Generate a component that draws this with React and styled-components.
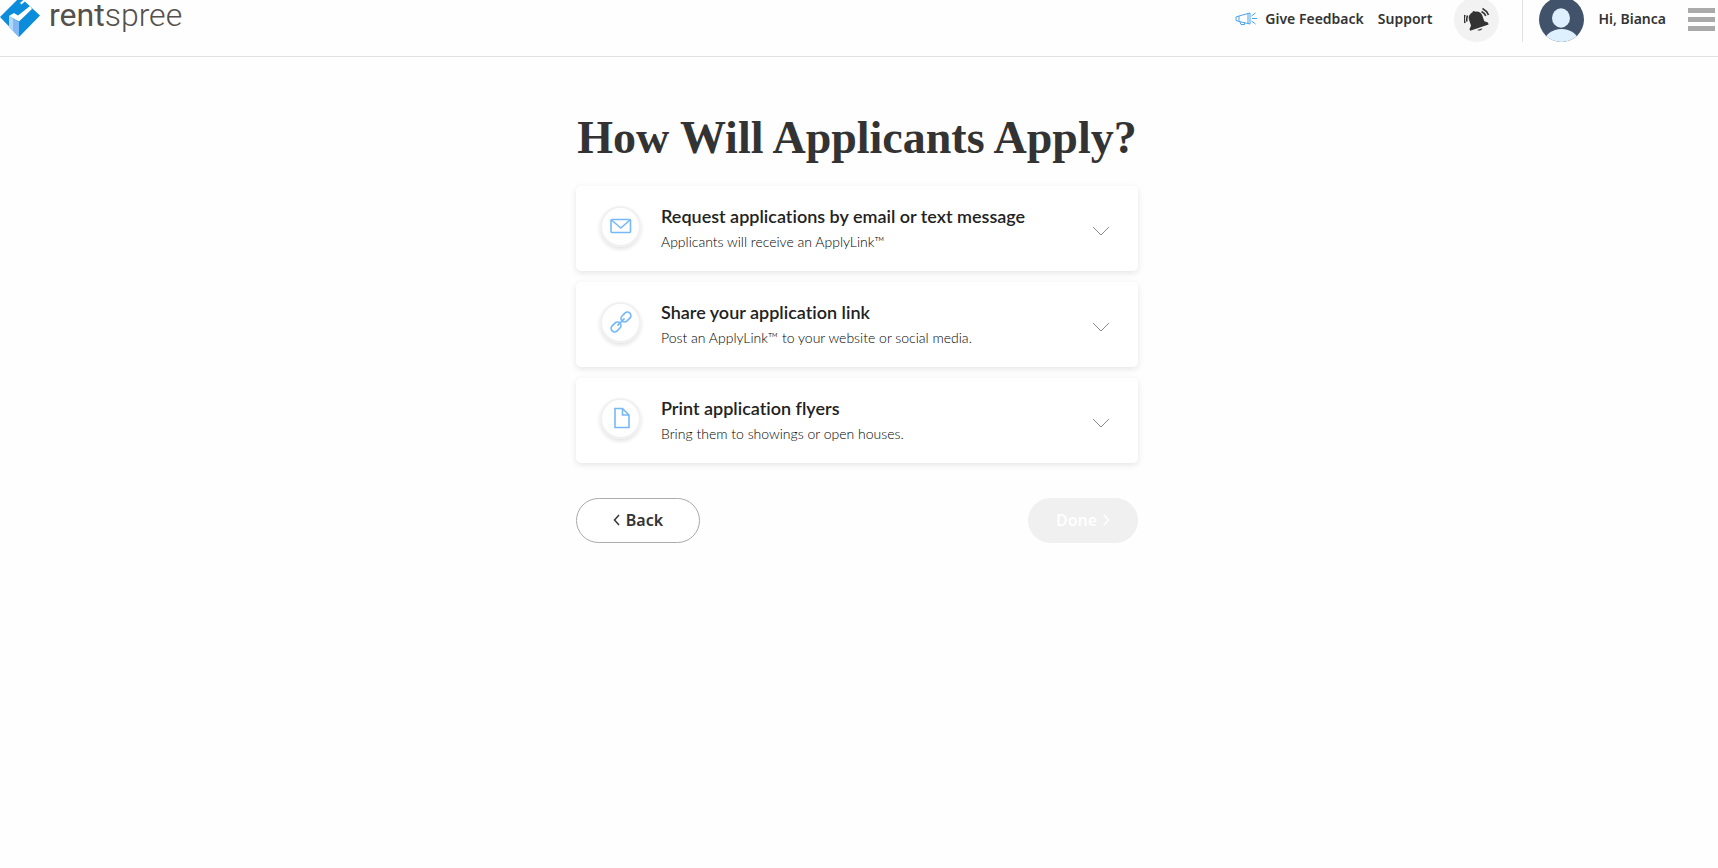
import React from 'react';
import styled, { createGlobalStyle } from 'styled-components';

const GlobalStyle = createGlobalStyle`
  * {
    box-sizing: border-box;
  }

  body {
    margin: 0;
    background-color: #fefefe;
    color: #333;
    font-family: Lato, sans-serif;
  }

  button {
    font-family: inherit;
    color: inherit;
  }
`;

const Header = styled.header`
  display: flex;
  align-items: flex-start;
  justify-content: space-between;
  height: 57px;
  padding-right: 3px;
  border-bottom: 1px solid #e1e1e1;
`;

const LogoLink = styled.a`
  display: flex;
  align-items: center;
  gap: 9px;
  height: 30px;
  color: #54504c;
  font-family: Roboto, sans-serif;
  font-size: 32px;
  line-height: 30px;
  text-decoration: none;
`;

const LogoLight = styled.span`
  font-weight: 300;
`;

const Nav = styled.nav`
  display: flex;
  align-items: center;
  height: 39px;
  font-family: 'Noto Sans', sans-serif;
  font-size: 14px;
  font-weight: 600;
  line-height: 20px;
`;

const NavLink = styled.a`
  display: flex;
  align-items: center;
  gap: 8px;
  margin-right: 14px;
  padding-bottom: 2px;
  color: #333;
  text-decoration: none;
`;

const BellButton = styled.button`
  display: flex;
  align-items: center;
  justify-content: center;
  width: 45px;
  height: 45px;
  margin-left: 8px;
  padding: 0;
  border: none;
  border-radius: 50%;
  background-color: #f2f2f2;
  cursor: pointer;
`;

const Divider = styled.span`
  width: 1px;
  height: 45px;
  margin: 0 16px 0 23px;
  background-color: #e1e1e1;
`;

const UserName = styled.span`
  margin: 0 22px 0 14px;
  padding-bottom: 2px;
`;

const MenuButton = styled.button`
  display: flex;
  flex-direction: column;
  gap: 4px;
  width: 27px;
  padding: 0;
  border: none;
  background: none;
  cursor: pointer;
`;

const MenuBar = styled.span`
  width: 100%;
  height: 5px;
  background-color: #aaa;
`;

const Main = styled.main`
  display: flex;
  flex-direction: column;
  align-items: center;
  padding: 51px 4px 40px 0;
`;

const Title = styled.h1`
  margin: 0 0 18px;
  font-family: 'Liberation Serif', serif;
  font-size: 46px;
  font-weight: 700;
  line-height: 60px;
  text-align: center;
`;

const Content = styled.div`
  width: 100%;
  max-width: 562px;
`;

const OptionList = styled.div`
  display: flex;
  flex-direction: column;
  gap: 11px;
`;

const OptionCard = styled.button`
  display: flex;
  align-items: center;
  width: 100%;
  height: 85px;
  padding: 0 28px 2px 24px;
  border: none;
  border-radius: 5px;
  background-color: #fff;
  box-shadow: 0 2px 6px rgba(0, 0, 0, 0.1);
  text-align: left;
  cursor: pointer;

  > svg {
    margin-top: 6px;
  }
`;

const IconCircle = styled.span`
  display: flex;
  align-items: center;
  justify-content: center;
  width: 41px;
  height: 41px;
  margin: 0 20px 3px 0;
  border: 2px solid #f0f0f0;
  border-radius: 50%;
  box-shadow: 0 2px 4px rgba(0, 0, 0, 0.12);
`;

const OptionText = styled.span`
  display: flex;
  flex: 1;
  flex-direction: column;
  gap: 4px;
  font-variant-ligatures: none;
`;

const OptionTitle = styled.span`
  color: #222;
  font-size: 18px;
  font-weight: 600;
  line-height: 24px;
`;

const OptionNote = styled.span`
  color: #000;
  font-size: 14px;
  font-weight: 300;
  line-height: 20px;
`;

const Actions = styled.div`
  display: flex;
  justify-content: space-between;
  margin-top: 35px;
`;

const ActionButton = styled.button`
  display: flex;
  align-items: center;
  justify-content: center;
  gap: 5px;
  width: ${({ $wide }) => ($wide ? '124px' : '110px')};
  height: 45px;
  padding: 0 0 2px;
  border: 1px solid #aaa;
  border-radius: 23px;
  background-color: #fff;
  color: #333;
  font-family: 'Noto Sans', sans-serif;
  font-size: 16px;
  font-weight: 600;
  cursor: pointer;

  &:disabled {
    border-color: #f0f0f0;
    background-color: #f0f0f0;
    color: #fff;
    cursor: default;
  }
`;

const LogoMark = () => (
  <svg width="40" height="44" viewBox="0 -4 40 44" aria-hidden="true">
    <path d="M20 0L40 18.500L19 40L0 20Z" fill="#0b8ddb" />
    <path d="M9 19L19 25V40L9 30Z" fill="#83b9f2" />
    <path d="M9 19L13 22V34L9 30Z" fill="#b5d5fb" />
    <path d="M9 19L14 16L18 18.500L30 9L32 12L19 24.500Z" fill="#fff" />
    <path d="M20 6L25 1.500L26.500 3L21.500 7.500Z" fill="#fff" />
  </svg>
);

const MegaphoneIcon = () => (
  <svg width="22" height="14" viewBox="0 0 22 14" fill="none" stroke="#4ba3ee" aria-hidden="true">
    <path d="M1 5L4 4L13 1.500V11.500L4 9.500L1 8.500ZM4 4V9.500M5 10L6 12.500H9.500V11M13 1.500L15 1V12L13 11.500" />
    <path d="M16.500 4L20.500 1M17 6.500H22M16.500 9L20.500 12" />
  </svg>
);

const BellIcon = () => (
  <svg width="26" height="26" viewBox="0 0 26 26" fill="none" aria-hidden="true">
    <g transform="rotate(-19 13 13)">
      <path d="M3 21V19L5.500 16.500V10.500C5.500 7 8 5 11 4.500Q12.500 2.500 14 4.500C17 5 19.500 7 19.500 10.500V16.500L22.500 19V21Z" fill="#333" />
      <path d="M10 22.500H15.500Q13 25.500 10 22.500Z" fill="#333" />
    </g>
    <path d="M1 8Q-0.500 12 1 16M3.500 8.500Q2.200 12 3 14.500M17.500 4.500Q20.500 6 21.800 9M18.500 1.500Q22.500 3.500 24.500 8" stroke="#333" strokeWidth="1.600" />
  </svg>
);

const Avatar = () => (
  <svg width="45" height="45" viewBox="0 0 45 45" role="img" aria-label="Profile">
    <defs>
      <clipPath id="avatar-clip">
        <circle cx="22.500" cy="22.500" r="22.500" />
      </clipPath>
    </defs>
    <g clipPath="url(#avatar-clip)">
      <rect width="45" height="45" fill="#40536b" />
      <ellipse cx="22" cy="21" rx="9" ry="9.700" fill="#deeffe" />
      <ellipse cx="22.500" cy="45" rx="17" ry="13" fill="#deeffe" />
    </g>
  </svg>
);

const MailIcon = () => (
  <svg width="22" height="22" viewBox="0 0 22 22" fill="none" stroke="#76b8fa" strokeWidth="1.600" aria-hidden="true">
    <rect x="1" y="4.500" width="19.500" height="13" rx="1" />
    <path d="M1.500 5L10.750 13L20 5" />
  </svg>
);

const LinkIcon = () => (
  <svg width="22" height="22" viewBox="0 0 22 22" fill="none" stroke="#76b8fa" strokeWidth="1.700" aria-hidden="true">
    <g transform="rotate(-45 11 11)">
      <rect x="-1.500" y="7.500" width="11" height="7" rx="3.500" />
      <rect x="12.500" y="7.500" width="11" height="7" rx="3.500" />
      <path d="M6 11H16" />
    </g>
  </svg>
);

const FileIcon = () => (
  <svg width="22" height="22" viewBox="0 0 22 22" fill="none" stroke="#76b8fa" strokeWidth="1.600" aria-hidden="true">
    <path d="M5 1.500H12.500L19 8V20.500H5ZM12.500 1.500V8H19" />
  </svg>
);

const ChevronDown = () => (
  <svg width="18" height="10" viewBox="0 0 18 10" fill="none" stroke="#8c8c8c" aria-hidden="true">
    <path d="M1 1L9 9L17 1" />
  </svg>
);

const Caret = ({ d }) => (
  <svg width="8" height="12" viewBox="0 0 8 12" fill="none" stroke="currentColor" strokeWidth="1.500" aria-hidden="true">
    <path d={d} />
  </svg>
);

const options = [
  {
    icon: <MailIcon />,
    title: 'Request applications by email or text message',
    note: 'Applicants will receive an ApplyLink™',
  },
  {
    icon: <LinkIcon />,
    title: 'Share your application link',
    note: 'Post an ApplyLink™ to your website or social media.',
  },
  {
    icon: <FileIcon />,
    title: 'Print application flyers',
    note: 'Bring them to showings or open houses.',
  },
];

const App = () => {
  return (
    <>
      <GlobalStyle />
      <Header>
        <LogoLink href="#home">
          <LogoMark />
          <span>
            rent<LogoLight>spree</LogoLight>
          </span>
        </LogoLink>
        <Nav>
          <NavLink href="#feedback">
            <MegaphoneIcon />
            Give Feedback
          </NavLink>
          <NavLink href="#support">Support</NavLink>
          <BellButton aria-label="Notifications">
            <BellIcon />
          </BellButton>
          <Divider />
          <Avatar />
          <UserName>Hi, Bianca</UserName>
          <MenuButton aria-label="Menu">
            <MenuBar />
            <MenuBar />
            <MenuBar />
          </MenuButton>
        </Nav>
      </Header>
      <Main>
        <Title>How Will Applicants Apply?</Title>
        <Content>
          <OptionList>
            {options.map(({ icon, title, note }) => (
              <OptionCard key={title} aria-expanded="false">
                <IconCircle>{icon}</IconCircle>
                <OptionText>
                  <OptionTitle>{title}</OptionTitle>
                  <OptionNote>{note}</OptionNote>
                </OptionText>
                <ChevronDown />
              </OptionCard>
            ))}
          </OptionList>
          <Actions>
            <ActionButton $wide>
              <Caret d="M6 1L1.500 6L6 11" />
              Back
            </ActionButton>
            <ActionButton disabled>
              Done
              <Caret d="M2 1L6.500 6L2 11" />
            </ActionButton>
          </Actions>
        </Content>
      </Main>
    </>
  );
};

export default App;
